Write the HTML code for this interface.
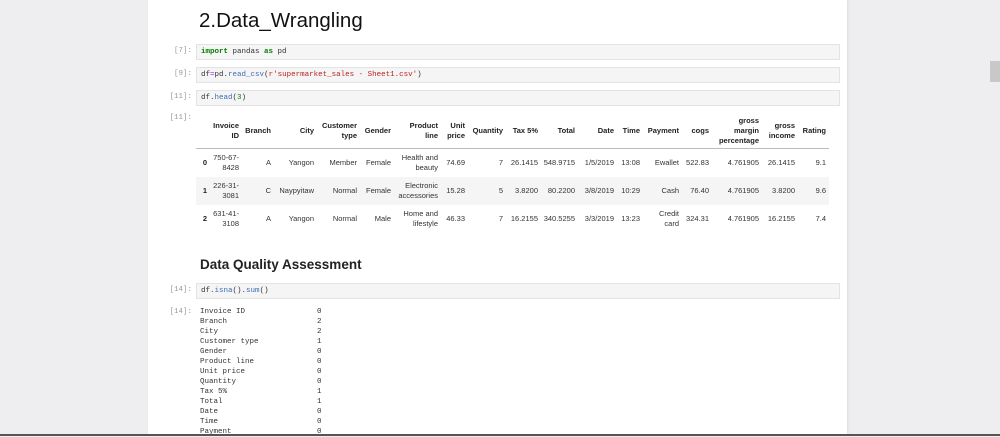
<!DOCTYPE html>
<html><head><meta charset="utf-8"><style>
body{margin:0;width:1000px;height:436px;background:#eeedef;position:relative;overflow:hidden;font-family:"Liberation Sans",sans-serif;}
#panel{position:absolute;left:148px;top:0;width:699px;height:434px;background:#fff;box-shadow:1px 0 2px #ddd;}
.abs{position:absolute;}
.pr{position:absolute;width:44px;text-align:right;font-family:"Liberation Mono",monospace;font-size:7.5px;color:#999;left:148px;}
.box{position:absolute;left:196px;width:644px;height:16px;background:#f5f5f5;border:1px solid #e3e3e3;box-sizing:border-box;font-family:"Liberation Mono",monospace;font-size:7.5px;line-height:14px;padding-left:4px;color:#333;}
.kw{color:#008000;font-weight:bold}.fn{color:#3a6db5}.st{color:#ba2121}.nm{color:#080}
table{position:absolute;left:196px;top:114px;border-collapse:collapse;font-size:7.5px;color:#333;table-layout:fixed;}
td,th{text-align:right;padding:0 3px 0 0;line-height:10px;overflow:hidden;}
th{font-weight:bold;color:#222;height:34px;border-bottom:1px solid #bbb;vertical-align:middle;}
td{height:28px;}
tr.g td{background:#f5f5f5;}
.out{position:absolute;left:200px;top:306px;font-family:"Liberation Mono",monospace;font-size:7.5px;line-height:10px;color:#333;white-space:pre;}
</style></head><body>
<div id="panel"></div>
<div class="abs" style="left:199px;top:9px;font-size:20.5px;color:#111;">2.Data_Wrangling</div>
<div class="pr" style="top:47px">[7]:</div>
<div class="box" style="top:44px"><span class="kw">import</span> pandas <span class="kw">as</span> pd</div>
<div class="pr" style="top:70px">[9]:</div>
<div class="box" style="top:67px">df<span style="color:#a2f">=</span>pd.<span class="fn">read_csv</span>(<span class="st">r'supermarket_sales - Sheet1.csv'</span>)</div>
<div class="pr" style="top:93px">[11]:</div>
<div class="box" style="top:90px">df.<span class="fn">head</span>(<span class="nm">3</span>)</div>
<div class="pr" style="top:114px">[11]:</div>
<table>
<colgroup><col style="width:14px"><col style="width:32px"><col style="width:32px"><col style="width:43px"><col style="width:43px"><col style="width:34px"><col style="width:47px"><col style="width:27px"><col style="width:38px"><col style="width:35px"><col style="width:37px"><col style="width:39px"><col style="width:26px"><col style="width:39px"><col style="width:30px"><col style="width:50px"><col style="width:36px"><col style="width:31px"></colgroup>
<tr><th></th><th>Invoice<br>ID</th><th>Branch</th><th>City</th><th>Customer<br>type</th><th>Gender</th><th>Product<br>line</th><th>Unit<br>price</th><th>Quantity</th><th>Tax 5%</th><th>Total</th><th>Date</th><th>Time</th><th>Payment</th><th>cogs</th><th>gross<br>margin<br>percentage</th><th>gross<br>income</th><th>Rating</th></tr>
<tr><th style="border:0;height:28px">0</th><td>750-67-<br>8428</td><td>A</td><td>Yangon</td><td>Member</td><td>Female</td><td>Health and<br>beauty</td><td>74.69</td><td>7</td><td>26.1415</td><td>548.9715</td><td>1/5/2019</td><td>13:08</td><td>Ewallet</td><td>522.83</td><td>4.761905</td><td>26.1415</td><td>9.1</td></tr>
<tr class="g"><th style="border:0;height:28px;background:#f5f5f5">1</th><td>226-31-<br>3081</td><td>C</td><td>Naypyitaw</td><td>Normal</td><td>Female</td><td>Electronic<br>accessories</td><td>15.28</td><td>5</td><td>3.8200</td><td>80.2200</td><td>3/8/2019</td><td>10:29</td><td>Cash</td><td>76.40</td><td>4.761905</td><td>3.8200</td><td>9.6</td></tr>
<tr><th style="border:0;height:28px">2</th><td>631-41-<br>3108</td><td>A</td><td>Yangon</td><td>Normal</td><td>Male</td><td>Home and<br>lifestyle</td><td>46.33</td><td>7</td><td>16.2155</td><td>340.5255</td><td>3/3/2019</td><td>13:23</td><td>Credit<br>card</td><td>324.31</td><td>4.761905</td><td>16.2155</td><td>7.4</td></tr>
</table>
<div class="abs" style="left:200px;top:257px;font-size:13.5px;font-weight:bold;color:#222;">Data Quality Assessment</div>
<div class="pr" style="top:286px">[14]:</div>
<div class="box" style="top:283px">df.<span class="fn">isna</span>().<span class="fn">sum</span>()</div>
<div class="pr" style="top:308px">[14]:</div>
<div class="out" style="top:307px">Invoice ID                0
Branch                    2
City                      2
Customer type             1
Gender                    0
Product line              0
Unit price                0
Quantity                  0
Tax 5%                    1
Total                     1
Date                      0
Time                      0
Payment                   0</div>
<div class="abs" style="left:990px;top:61px;width:10px;height:21px;background:#c8c8c8;"></div>
<div class="abs" style="left:0;top:434px;width:1000px;height:2px;background:#555;"></div>
</body></html>
